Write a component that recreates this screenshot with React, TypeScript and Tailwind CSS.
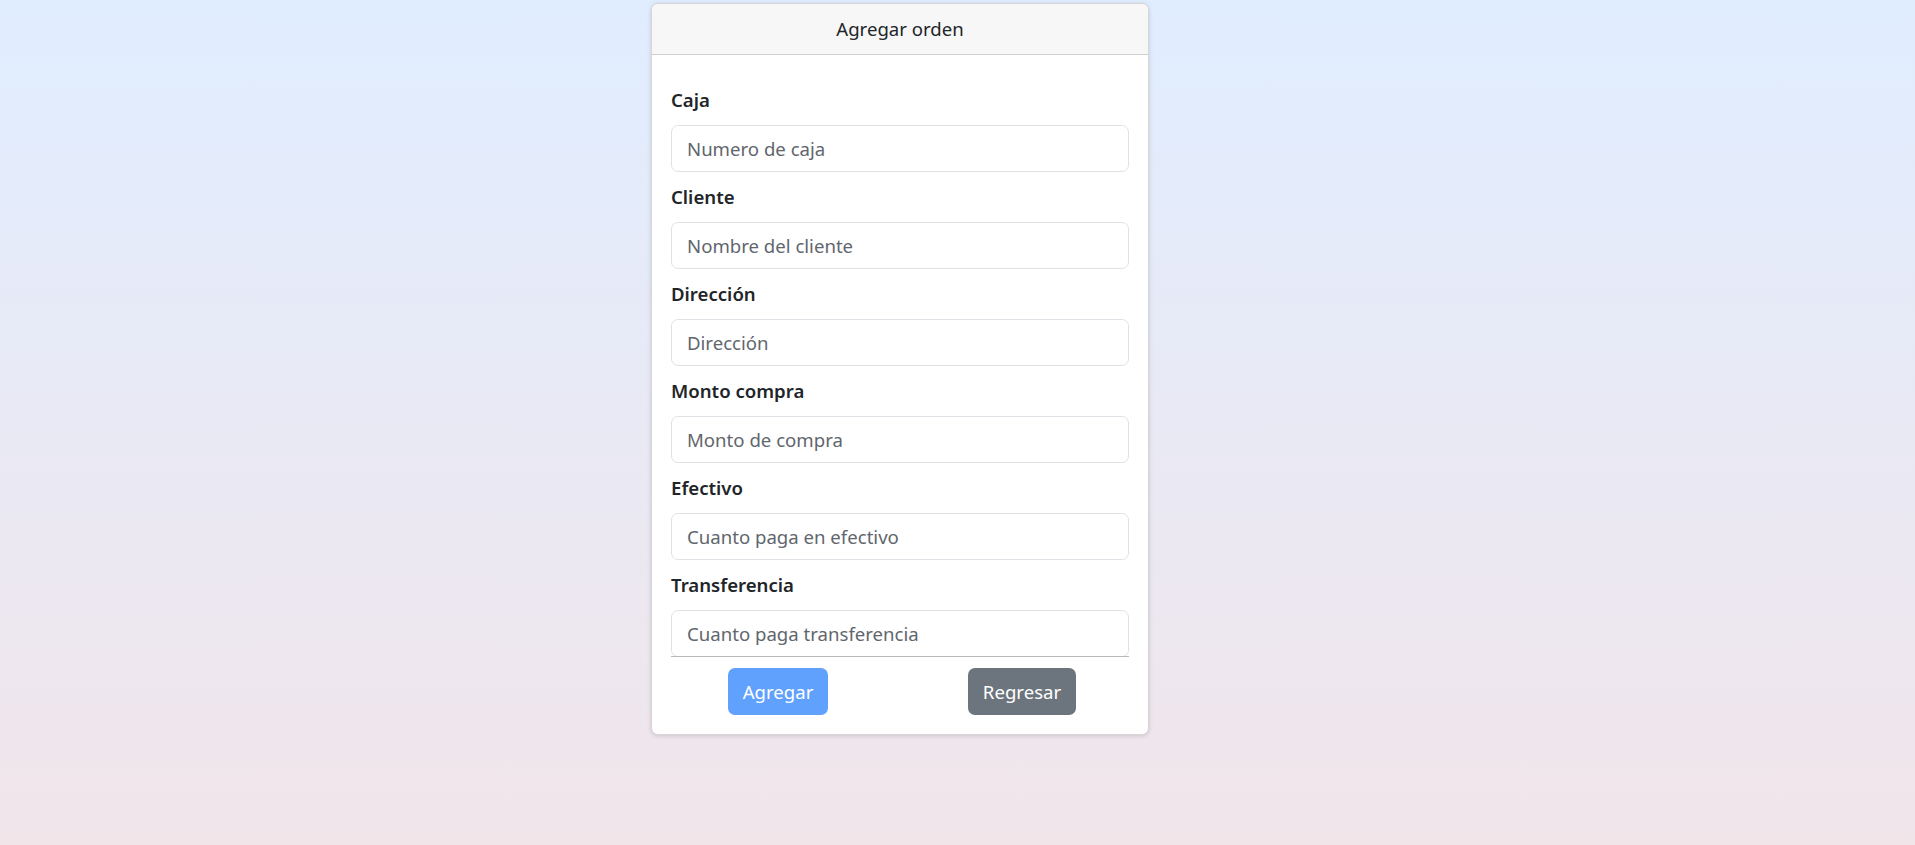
const fields = [
  { label: "Caja", placeholder: "Numero de caja" },
  { label: "Cliente", placeholder: "Nombre del cliente" },
  { label: "Dirección", placeholder: "Dirección" },
  { label: "Monto compra", placeholder: "Monto de compra" },
  { label: "Efectivo", placeholder: "Cuanto paga en efectivo" },
  { label: "Transferencia", placeholder: "Cuanto paga transferencia" },
];

export default function App() {
  return (
    <div
      className="min-h-screen w-full bg-gradient-to-b from-[#e0edff] to-[#f1e5ea] text-[#212529]"
      style={{ fontFamily: '"Noto Sans", "Open Sans", sans-serif' }}
    >
      <div className="flex pt-[3px] pl-[651px]">
        {/* Tarjeta */}
        <div className="w-[498px] bg-white border border-[#d6d6d8] rounded-[7px] shadow-[0_1px_4px_rgba(0,0,0,0.15)] overflow-hidden">
          <div className="h-[51px] bg-[#f7f7f7] border-b border-[#d0d0d2] flex items-center justify-center text-[18.6px]">
            Agregar orden
          </div>

          <div className="px-[19px] pt-[30px] pb-[19px]">
            <form className="flex flex-col gap-[10px]">
              {fields.map((f) => (
                <div key={f.label} className="flex flex-col">
                  <label className="text-[18.6px] leading-[30px] font-semibold mb-[10px]">
                    {f.label}
                  </label>
                  <input
                    type="text"
                    placeholder={f.placeholder}
                    className="h-[47px] w-full border border-[#dee2e6] rounded-[7px] px-[15px] text-[18.6px] placeholder:text-[#5f666d] outline-none"
                  />
                </div>
              ))}
            </form>
            <hr className="border-0 border-t border-[#b9babc] mt-0 -translate-y-[1px]" />

            <div className="grid grid-cols-2 gap-[30px] mt-[10px]">
              <div className="flex justify-center">
                <button className="h-[47px] px-[15px] rounded-[7px] bg-[#61a1fe] text-white text-[18.6px]">
                  Agregar
                </button>
              </div>
              <div className="flex justify-center">
                <button className="h-[47px] px-[15px] rounded-[7px] bg-[#6c757d] text-white text-[18.6px]">
                  Regresar
                </button>
              </div>
            </div>
          </div>
        </div>
      </div>
    </div>
  );
}
